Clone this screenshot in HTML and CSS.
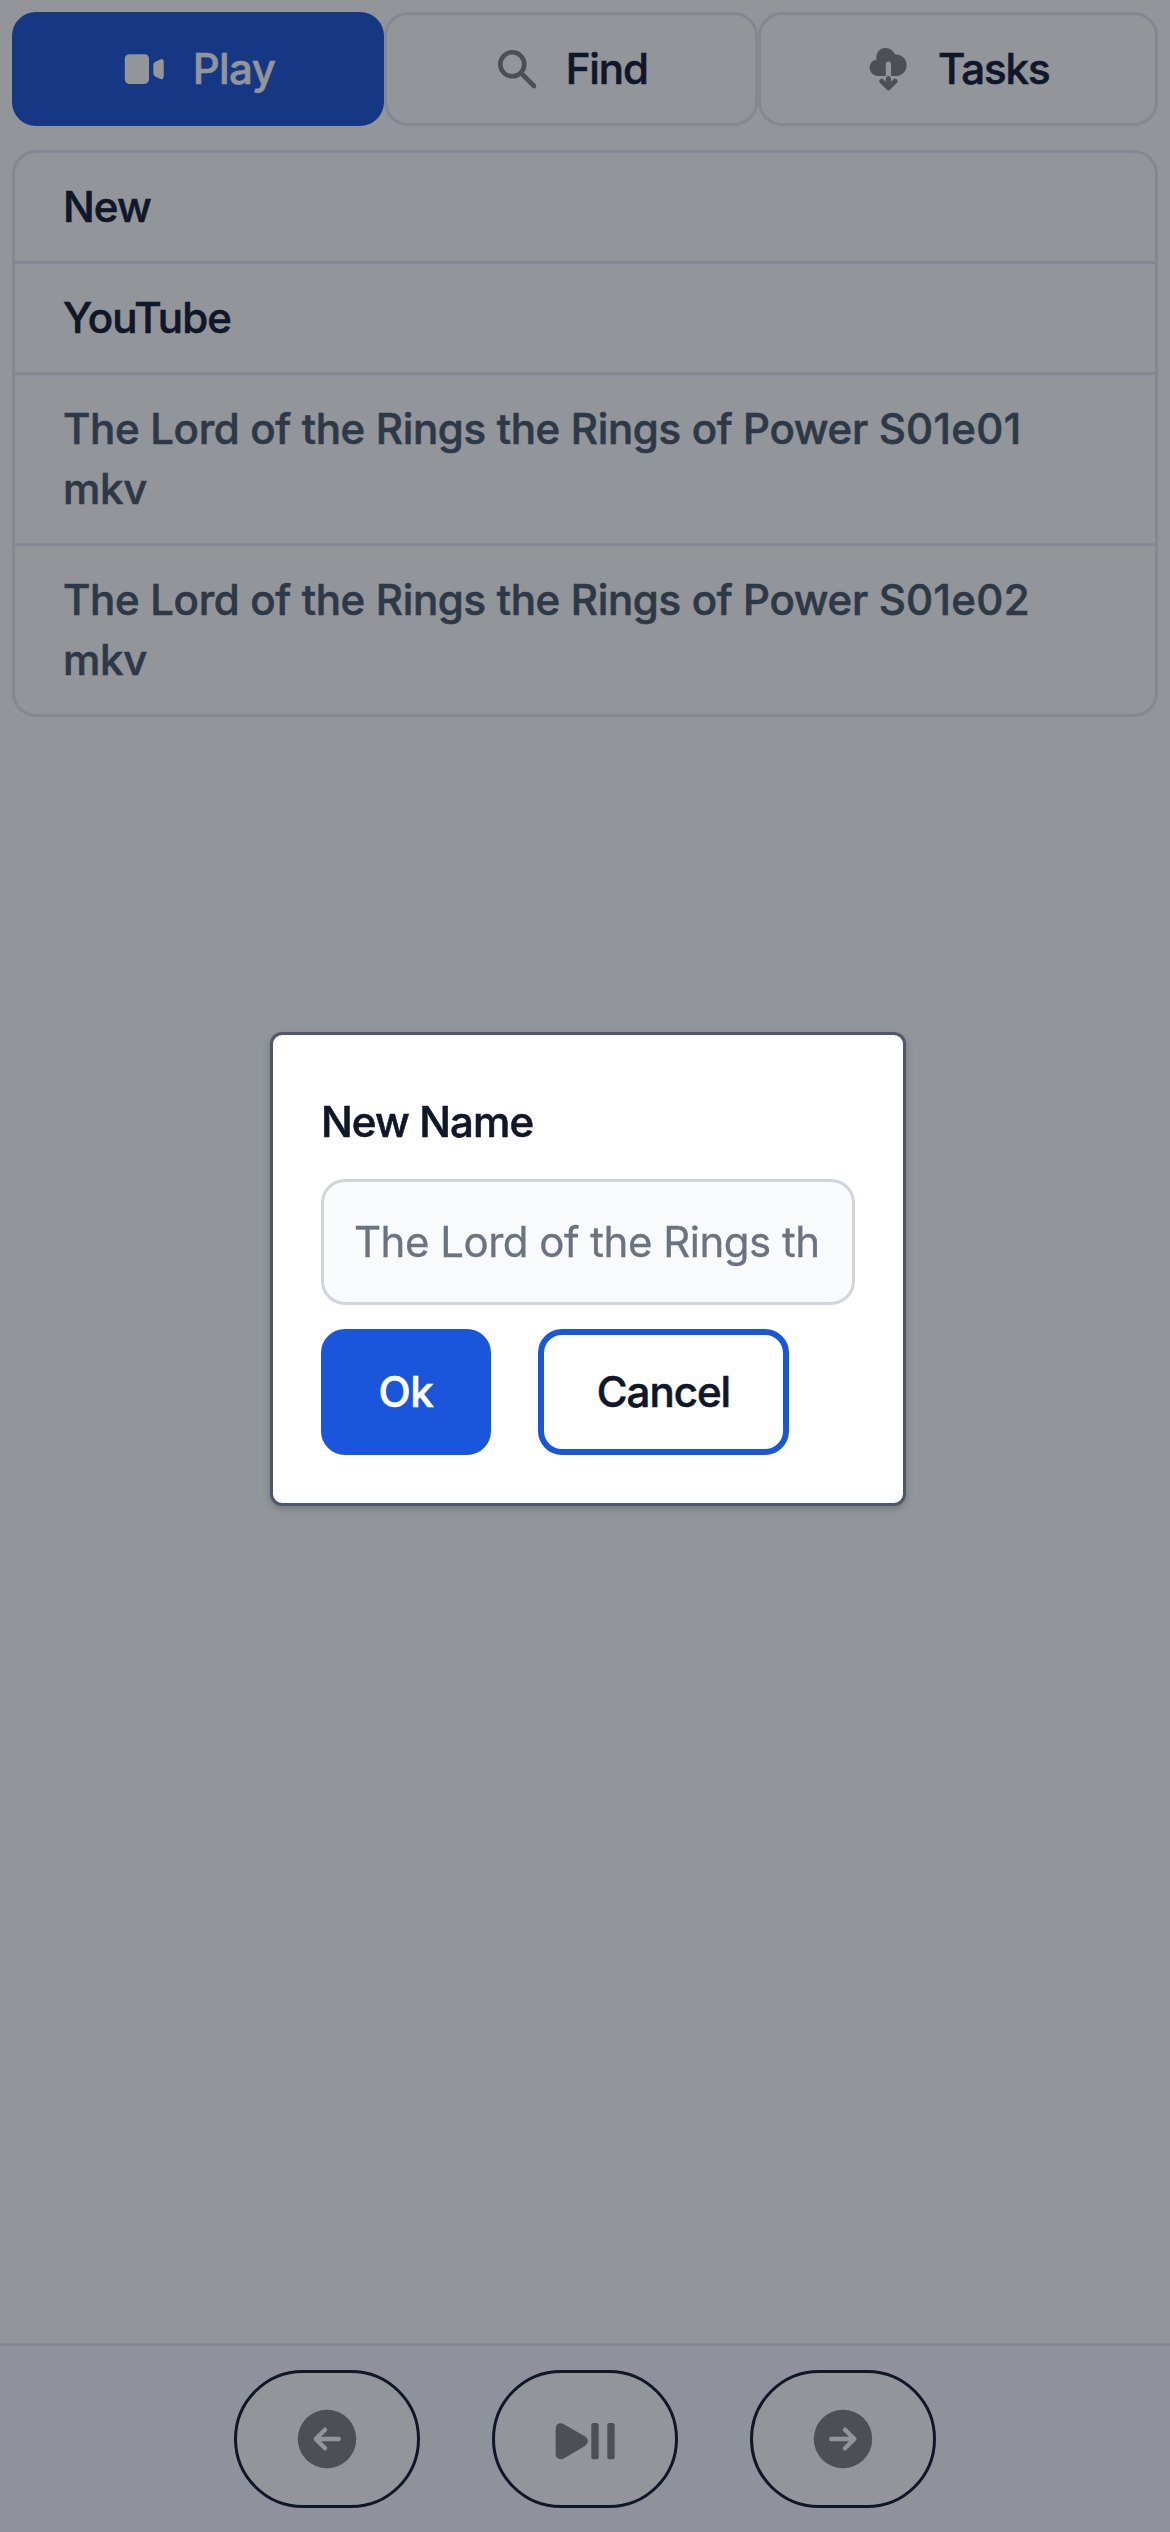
FILE: index.html
```html
<!DOCTYPE html>
<html lang="en">
<head>
<meta charset="utf-8">
<title>Player</title>
<link rel="stylesheet" href="styles.css">
</head>
<body>
<div class="app">
  <nav class="tabs">
    <button class="tab tab-play">
      <svg class="tab-icon" viewBox="0 0 48 48"><rect x="3.8" y="9.3" width="24.2" height="29.6" rx="4.5"/><path d="M34 17.1 39.2 14.4Q42.5 13.2 42.7 17V31.5Q42.3 35.3 39 33.8L34.2 31.4Q32.3 30.3 32.3 28V20Q32.3 18 34 17.1Z"/></svg>
      <span class="tab-text">Play</span>
    </button>
    <button class="tab tab-find">
      <svg class="tab-icon line" viewBox="0 0 48 48"><circle cx="18.3" cy="19.3" r="12"/><path d="m27.4 28.4 12.6 12.6"/></svg>
      <span class="tab-text">Find</span>
    </button>
    <button class="tab tab-tasks">
      <svg class="tab-icon" viewBox="0 0 48 48"><path d="M11.5 31A8.35 8.35 0 0 1 10.7 14.4Q10.2 11.8 10.2 11.5A9.5 9.5 0 0 1 28.7 9.5 10.8 10.8 0 1 1 31 31H25V19.2a2.6 2.6 0 0 0-5.2 0V31Z"/><path class="arrow" d="M22.4 33.5v8.5M15.7 36.2l6.7 6.6 6.7-6.6"/></svg>
      <span class="tab-text">Tasks</span>
    </button>
  </nav>
  <main class="content">
    <ul class="list">
      <li class="row">New</li>
      <li class="row">YouTube</li>
      <li class="row file">The Lord of the Rings the Rings of Power <span class="episode">S01e01</span> mkv</li>
      <li class="row file">The Lord of the Rings the Rings of Power <span class="episode">S01e02</span> mkv</li>
    </ul>
  </main>
  <footer class="controls">
    <button class="control" aria-label="Previous"><svg class="control-icon" viewBox="-30 -30 60 60"><circle r="29.2"/><path class="cut" d="M11.7 0H-11M-2-9.3-11.3 0-2 9.3"/></svg></button>
    <button class="control" aria-label="Play or pause"><svg class="control-icon" viewBox="-30 -30 60 60"><path d="M-29.3-10.5C-29.3-15.2-25-17-20.8-14.6L.2-2.4Q5.8 2.2.2 6.8L-20.8 19.2C-25 21.6-29.3 19.2-29.3 15Z"/><rect x="6.3" y="-16" width="7.4" height="36.3" rx="2"/><rect x="22.3" y="-16" width="7.4" height="36.3" rx="2"/></svg></button>
    <button class="control" aria-label="Next"><svg class="control-icon" viewBox="-30 -30 60 60"><circle r="29.2"/><path class="cut" d="M-11.7 0H11M2-9.3 11.3 0 2 9.3"/></svg></button>
  </footer>
</div>
<div class="overlay">
  <form class="dialog">
    <label class="label" for="name">New Name</label>
    <input class="field" id="name" placeholder="The Lord of the Rings th">
    <div class="actions">
      <button type="button" class="btn ok">Ok</button>
      <button type="button" class="btn cancel">Cancel</button>
    </div>
  </form>
</div>
</body>
</html>
```
FILE: styles.css
```css
* { box-sizing: border-box; }
body {
  margin: 0;
  background: #929599;
  color: #0f1728;
  font: 500 42px/60px Inter, "Liberation Sans", sans-serif;
  letter-spacing: -0.9px;
  -webkit-text-stroke: 0.6px;
}
button { font: inherit; letter-spacing: inherit; color: inherit; margin: 0; padding: 0; background: none; }
.app { height: 2532px; display: flex; flex-direction: column; }
.tabs { display: grid; grid-template-columns: 372px 373.5px 400.5px; padding: 12px 12px 0; }
.tab {
  height: 114px;
  display: flex;
  align-items: center;
  justify-content: center;
  gap: 24px;
  border: 3px solid #858892;
  border-radius: 24px;
}
.tab-text { letter-spacing: -1.1px; }
.tab-play { background: #163884; border-color: #163884; color: #929599; }
.tab-play .tab-text { letter-spacing: -0.6px; }
.tab-icon { width: 48px; height: 48px; fill: #4c4f53; flex: none; }
.tab-play .tab-icon { fill: #929599; }
.tab-icon.line { fill: none; stroke: #4c4f53; stroke-width: 4.6; stroke-linecap: round; }
.arrow { fill: none; stroke: #4c4f53; stroke-width: 5; stroke-linecap: round; stroke-linejoin: round; }
.content { flex: 1; padding: 24px 12px; }
.list { list-style: none; margin: 0; padding: 0; border: 3px solid #858892; border-radius: 24px; }
.row { padding: 24px 48px; }
.row + .row { border-top: 3px solid #858892; }
.file { color: #2e3947; letter-spacing: -0.34px; }
.episode { letter-spacing: 0.3px; }
.controls {
  display: flex;
  justify-content: center;
  gap: 72px;
  padding: 24px;
  background: #8f929a;
  border-top: 3px solid #858892;
}
.control {
  width: 186px;
  height: 138px;
  display: flex;
  align-items: center;
  justify-content: center;
  background: #929599;
  border: 3px solid #0f1728;
  border-radius: 69px;
}
.control-icon { width: 60px; height: 60px; fill: #4c4f53; }
.cut { fill: none; stroke: #929599; stroke-width: 4.4; stroke-linecap: round; stroke-linejoin: round; }
.overlay {
  position: fixed;
  inset: 0;
  display: flex;
  align-items: center;
  justify-content: center;
  padding: 6px 0 0 6px;
}
.dialog {
  width: 636px;
  height: 474px;
  padding: 57px 48px 42px;
  background: #fff;
  border: 3px solid #4e586a;
  border-radius: 12px;
  box-shadow: 0 3px 9px rgba(0, 0, 0, .1), 0 3px 6px rgba(0, 0, 0, .1);
}
.label { display: block; margin-bottom: 27px; }
.field {
  display: block;
  width: 100%;
  height: 126px;
  margin: 0;
  padding: 29px 30px 31px;
  background: #f9fafb;
  border: 3px solid #d1d5db;
  border-radius: 24px;
  font: inherit;
  font-weight: 400;
  letter-spacing: -0.5px;
  -webkit-text-stroke: 0.3px;
}
.field::placeholder { color: #6b7280; opacity: 1; }
.actions { display: flex; gap: 47px; margin-top: 24px; }
.btn { height: 126px; border: 6px solid #1a56db; border-radius: 24px; }
.ok { width: 170px; background: #1a56db; color: #fff; letter-spacing: -0.3px; }
.cancel { width: 251px; background: #fff; letter-spacing: -1px; }
```
